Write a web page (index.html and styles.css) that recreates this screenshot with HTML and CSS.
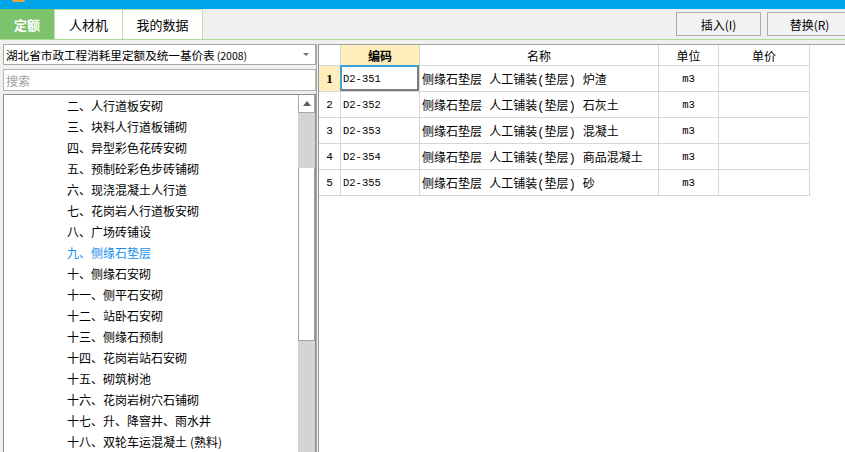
FILE: index.html
```html
<!DOCTYPE html>
<html lang="zh-CN">
<head>
<meta charset="utf-8">
<title>定额</title>
<link rel="stylesheet" href="styles.css">
</head>
<body>
<div class="topbar"><span class="logo"></span></div>
<div class="tabbar">
  <div class="tab active">定额</div>
  <div class="tab t2">人材机</div>
  <div class="tab t3">我的数据</div>
  <div class="actions">
    <div class="btn">插入(I)</div>
    <div class="btn">替换(R)</div>
  </div>
</div>
<div class="main">
  <div class="left">
    <div class="select"><span class="sel-text">湖北省市政工程消耗里定额及统一基价表<span class="yr">(2008)</span></span><span class="caret"></span></div>
    <div class="search">搜索</div>
    <div class="tree">
      <ul class="items">
        <li>二、人行道板安砌</li>
        <li>三、块料人行道板铺砌</li>
        <li>四、异型彩色花砖安砌</li>
        <li>五、预制砼彩色步砖铺砌</li>
        <li>六、现浇混凝土人行道</li>
        <li>七、花岗岩人行道板安砌</li>
        <li>八、广场砖铺设</li>
        <li class="current">九、侧缘石垫层</li>
        <li>十、侧缘石安砌</li>
        <li>十一、侧平石安砌</li>
        <li>十二、站卧石安砌</li>
        <li>十三、侧缘石预制</li>
        <li>十四、花岗岩站石安砌</li>
        <li>十五、砌筑树池</li>
        <li>十六、花岗岩树穴石铺砌</li>
        <li>十七、升、降窨井、雨水井</li>
        <li>十八、双轮车运混凝土<span class="paren">(熟料)</span></li>
      </ul>
      <div class="vscroll">
        <div class="up"><span class="arrow"></span></div>
        <div class="track-top"></div>
        <div class="thumb"></div>
        <div class="track-bottom"></div>
      </div>
    </div>
  </div>
  <div class="right">
    <div class="grid">
      <div class="c hd num"></div>
      <div class="c hd code-h">编码</div>
      <div class="c hd ctr">名称</div>
      <div class="c hd ctr">单位</div>
      <div class="c hd ctr">单价</div>

      <div class="c num first">1</div>
      <div class="c code selected">D2-351</div>
      <div class="c name">侧缘石垫层 人工铺装(垫层) 炉渣</div>
      <div class="c unit">m3</div>
      <div class="c"></div>

      <div class="c num">2</div>
      <div class="c code">D2-352</div>
      <div class="c name">侧缘石垫层 人工铺装(垫层) 石灰土</div>
      <div class="c unit">m3</div>
      <div class="c"></div>

      <div class="c num">3</div>
      <div class="c code">D2-353</div>
      <div class="c name">侧缘石垫层 人工铺装(垫层) 混凝土</div>
      <div class="c unit">m3</div>
      <div class="c"></div>

      <div class="c num">4</div>
      <div class="c code">D2-354</div>
      <div class="c name">侧缘石垫层 人工铺装(垫层) 商品混凝土</div>
      <div class="c unit">m3</div>
      <div class="c"></div>

      <div class="c num">5</div>
      <div class="c code">D2-355</div>
      <div class="c name">侧缘石垫层 人工铺装(垫层) 砂</div>
      <div class="c unit">m3</div>
      <div class="c"></div>
    </div>
  </div>
</div>
</body>
</html>
```

FILE: styles.css
```css
* { box-sizing: border-box; }
html, body { margin: 0; padding: 0; }
body {
  width: 845px;
  height: 452px;
  overflow: hidden;
  background: #f0f0f0;
  font-family: "Noto Sans CJK SC", "Liberation Sans", sans-serif;
  font-size: 12px;
  color: #000;
  display: flex;
  flex-direction: column;
}

.topbar {
  height: 9px;
  background: #00a4e8;
  flex: none;
}
.logo {
  display: block;
  width: 13px;
  height: 2px;
  margin-left: 12px;
  background: #f2a23a;
  border-radius: 0 0 3px 3px;
}

.tabbar {
  height: 31px;
  flex: none;
  display: flex;
  align-items: stretch;
  border-bottom: 1px solid #a9dc98;
  background: #f0f0f0;
}
.tab {
  display: flex;
  align-items: center;
  justify-content: center;
  font-size: 13px;
  background: #fff;
  border: 1px solid #b7e4a7;
  border-bottom: none;
}
.tab.active {
  width: 54px;
  background: #7dc36b;
  border: none;
  color: #fff;
  font-weight: bold;
}
.tab.t2 { width: 69px; }
.tab.t3 { width: 81px; margin-left: -1px; }

.actions {
  margin-left: auto;
  margin-right: -7px;
  display: flex;
  align-items: center;
  gap: 6px;
}
.btn {
  width: 85px;
  height: 24px;
  border: 1px solid #adadad;
  background: #f2f2f2;
  display: flex;
  align-items: center;
  justify-content: center;
  font-size: 12px;
}

.main {
  flex: 1;
  margin-top: 4px;
  display: flex;
  min-height: 0;
}

.left {
  width: 317px;
  flex: none;
  padding-left: 3px;
  border-right: 1px solid #a8a8a8;
  display: flex;
  flex-direction: column;
}
.select {
  height: 21px;
  width: 313px;
  background: #fff;
  border: 1px solid #a9a9a9;
  display: flex;
  align-items: center;
  padding-left: 2px;
  padding-right: 6px;
}
.sel-text { flex: 1; white-space: nowrap; font-size: 11.6px; }
.yr { font-size: 10.5px; margin-left: 2px; }
.caret {
  width: 0;
  height: 0;
  border-left: 3px solid transparent;
  border-right: 3px solid transparent;
  border-top: 3px solid #707070;
}
.search {
  margin-top: 4px;
  height: 22px;
  width: 313px;
  background: #fff;
  border: 1px solid #b4b4b4;
  color: #a0a0a0;
  padding-left: 2px;
  display: flex;
  align-items: center;
}
.tree {
  margin-top: 3px;
  flex: 1;
  width: 313px;
  background: #fff;
  border: 1px solid #8a8e96;
  border-bottom: none;
  display: flex;
  min-height: 0;
  overflow: hidden;
}
.items {
  list-style: none;
  margin: 0;
  padding: 0 0 0 63px;
  flex: 1;
}
.items li {
  height: 21px;
  line-height: 21px;
  white-space: nowrap;
}
.items li.current { color: #1890f0; }
.paren { margin-left: 3px; }

.vscroll {
  width: 17px;
  flex: none;
  display: flex;
  flex-direction: column;
  background: #d4d4d4;
}
.up {
  height: 18px;
  background: #fff;
  border: 1px solid #a8a8a8;
  border-top: none;
  display: flex;
  align-items: center;
  justify-content: center;
}
.arrow {
  width: 0;
  height: 0;
  border-left: 4px solid transparent;
  border-right: 4px solid transparent;
  border-bottom: 5px solid #5f5f5f;
}
.track-top { height: 55px; }
.thumb {
  height: 173px;
  background: #fff;
  border: 1px solid #a0a0a0;
  border-top: none;
}
.track-bottom { flex: 1; }

.right {
  flex: 1;
  margin-left: 1px;
  background: #fff;
  border-left: 1px solid #8f959c;
  border-top: 1px solid #a0a0a0;
}
.grid {
  display: grid;
  grid-template-columns: 22px 79px 239px 60px 91px;
  grid-template-rows: 21px repeat(5, 26px);
}
.c {
  border-right: 1px solid #d6d6d6;
  border-bottom: 1px solid #d6d6d6;
  display: flex;
  align-items: center;
  white-space: nowrap;
}
.hd { justify-content: center; }
.num { justify-content: center; font-family: "Liberation Mono", monospace; font-size: 11px; }
.hd.num { background: #fff; }
.code-h { background: #ffeebb; font-weight: bold; }
.num.first { background: #ffeebb; font-weight: bold; font-family: "Liberation Serif", serif; font-size: 13px; }
.code {
  padding-left: 2px;
  font-family: "Liberation Mono", monospace;
  font-size: 10.5px;
}
.name {
  padding-left: 2px;
  padding-top: 1px;
  font-family: "Liberation Mono", "Noto Sans CJK SC", monospace;
  font-size: 12px;
}
.unit {
  justify-content: center;
  font-family: "Liberation Mono", monospace;
  font-size: 10.5px;
}
.selected { position: relative; }
.selected::after {
  content: "";
  position: absolute;
  left: -1px;
  top: -1px;
  right: 0;
  bottom: 0;
  border-left: 2px solid #3aa3da;
  border-top: 2px solid #3aa3da;
  border-right: 2px solid #7c7c7c;
  border-bottom: 2px solid #7c7c7c;
}
```
